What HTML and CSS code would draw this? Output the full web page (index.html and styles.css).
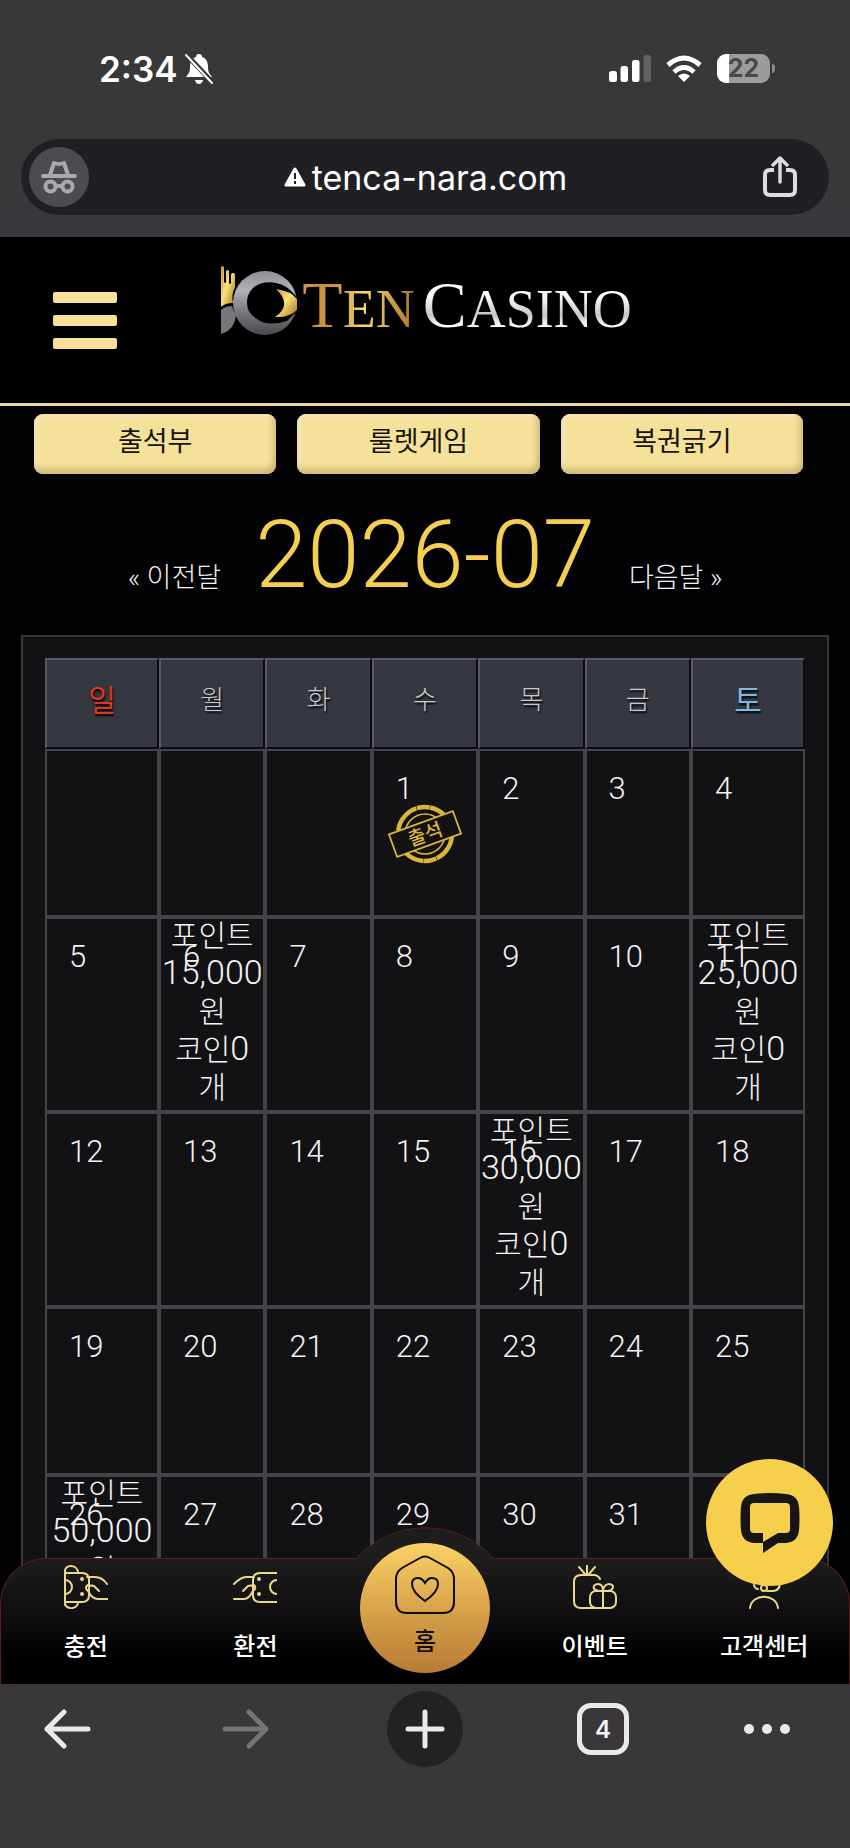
FILE: index.html
```html
<!DOCTYPE html>
<html lang="ko">

<head>
    <meta charset="UTF-8" />
    <meta name="viewport" content="width=device-width, initial-scale=1.0" />
    <title>TEN CASINO 출석부</title>
    <link rel="stylesheet" href="styles.css">
</head>

<body>
    <div class="browser-top">
        <div class="status">
            <div class="status-left">
                <span class="time">2:34</span>
                <svg class="bell" width="30" height="32" viewBox="0 0 30 32">
                    <path d="M15 1c2 0 3 1 3 3 4 1 6 5 6 10 0 6 2 7 4 10H2c2-3 4-4 4-10 0-5 2-9 6-10 0-2 1-3 3-3zM11 27h8q-1 4-4 4t-4-4z" fill="#fff" />
                    <path d="M1 0l28 30" stroke="#383838" stroke-width="5" />
                    <path d="M2 2l26 28" stroke="#fff" stroke-width="2" stroke-linecap="round" />
                </svg>
            </div>
            <div class="status-right">
                <svg width="42" height="27" viewBox="0 0 42 27" fill="#fff">
                    <rect x="0" y="16" width="8" height="11" rx="2.5" />
                    <rect x="11.500" y="11" width="7.500" height="16" rx="2.500" />
                    <rect x="23" y="5" width="7.500" height="22" rx="2.500" />
                    <rect x="34.500" y="0" width="7.500" height="27" rx="2.500" fill="#616161" />
                </svg>
                <svg width="36" height="28" viewBox="0 0 36 28" fill="none" stroke="#fff" stroke-width="5">
                    <path d="M2 10Q18 -4 34 10" />
                    <path d="M8 17Q18 8 28 17" />
                    <path d="M18 27l-6-6q6-5 12 0z" fill="#fff" stroke="none" />
                </svg>
                <div class="battery"><span>22</span></div>
            </div>
        </div>
        <div class="address">
            <button class="incognito" aria-label="시크릿 모드">
                <svg width="38" height="34" viewBox="0 0 38 34" fill="none" stroke="#a9a9ab" stroke-width="4" stroke-linecap="round" stroke-linejoin="round">
                    <path d="M3 16h32M10 15l4-12q5 2 10 0l4 12M16 26h6" />
                    <circle cx="10.500" cy="26.500" r="5" />
                    <circle cx="27.500" cy="26.500" r="5" />
                </svg>
            </button>
            <div class="url">
                <svg width="22" height="20" viewBox="0 0 22 20">
                    <path d="M11 2l9 16H2z" fill="#fff" stroke="#fff" stroke-width="3" stroke-linejoin="round" />
                    <path d="M11 6v6M11 14v3" stroke="#202024" stroke-width="2" />
                </svg>
                <span>tenca-nara.com</span>
            </div>
            <button class="share" aria-label="공유">
                <svg width="36" height="42" viewBox="0 0 36 42" fill="none" stroke="#dedbe1" stroke-width="4" stroke-linecap="round" stroke-linejoin="round">
                    <path d="M18 26V3M11 9l7-7 7 7" stroke-width="3.400" />
                    <path d="M12 14H8q-5 0-5 5v15q0 5 5 5h20q5 0 5-5V19q0-5-5-5h-4" stroke-linecap="butt" />
                </svg>
            </button>
        </div>
    </div>

    <div class="page">
        <header class="header">
            <button class="menu" aria-label="메뉴"><i></i><i></i><i></i></button>
            <a class="logo" href="#">
                <svg width="78" height="72" viewBox="0 0 78 72">
                    <defs>
                        <linearGradient id="silver" x1="0" y1="0" x2="0" y2="1">
                            <stop offset="0" stop-color="#8e8d93" />
                            <stop offset=".3" stop-color="#b3b2b8" />
                            <stop offset=".65" stop-color="#77767b" />
                            <stop offset="1" stop-color="#4a494e" />
                        </linearGradient>
                        <linearGradient id="gold" x1="0" y1="0" x2="1" y2="1">
                            <stop offset="0" stop-color="#c9952f" />
                            <stop offset=".45" stop-color="#f8e27a" />
                            <stop offset="1" stop-color="#a8741d" />
                        </linearGradient>
                    </defs>
                    <circle cx="44" cy="38" r="32" fill="url(#silver)" />
                    <path d="M26 38C26 16 52 12 68 24L76 32V46L66 56Q46 62 36 54 26 48 26 38z" fill="#000" />
                    <path d="M55 24Q70 26 76 34V45Q68 53 54 52 72 40 55 24z" fill="url(#gold)" />
                    <path d="M0 2Q1 0 3 2V17Q4 19 5 17V6Q7 4 8 6V18Q9 20 10 18V9Q12 7 14 9V22Q10 30 12 38 4 38 0 42z" fill="url(#gold)" />
                    <path d="M0 69V45Q4 41 11 41 12 46 15 49 14 65 0 69z" fill="#77767c" />
                </svg>
                <span class="logo-ten"><b>T</b>EN</span>
                <span class="logo-casino"><b>C</b>ASINO</span>
            </a>
        </header>

        <nav class="tabs">
            <button>출석부</button>
            <button>룰렛게임</button>
            <button>복권긁기</button>
        </nav>

        <div class="month">
            <a href="#">« 이전달</a>
            <h1>2026-07</h1>
            <a href="#">다음달 »</a>
        </div>

        <div class="calendar">
            <table>
                <colgroup>
                    <col class="w-edge">
                    <col class="w-wide">
                    <col>
                    <col>
                    <col class="w-wide">
                    <col>
                    <col class="w-edge">
                </colgroup>
                <thead>
                    <tr>
                        <th class="sun">일</th>
                        <th>월</th>
                        <th>화</th>
                        <th>수</th>
                        <th>목</th>
                        <th>금</th>
                        <th class="sat">토</th>
                    </tr>
                </thead>
                <tbody>
                    <tr>
                        <td></td>
                        <td></td>
                        <td></td>
                        <td><span class="day">1</span>
                            <svg class="stamp" width="74" height="62" viewBox="0 0 74 62">
                                <g fill="none" stroke="#d9b53a">
                                    <circle cx="37" cy="31" r="27" stroke-width="4.500" stroke-dasharray="30 .6 13 .4" />
                                    <circle cx="37" cy="31" r="20" stroke-width="1.500" />
                                </g>
                                <g transform="rotate(-20 37 31)">
                                    <rect x="3" y="19" width="68" height="24" fill="#121114" stroke="#d9b53a" stroke-width="1.800" />
                                    <text x="37" y="38" text-anchor="middle" class="stamp-text">출석</text>
                                </g>
                            </svg>
                        </td>
                        <td><span class="day">2</span></td>
                        <td><span class="day">3</span></td>
                        <td><span class="day">4</span></td>
                    </tr>
                    <tr>
                        <td><span class="day">5</span></td>
                        <td><span class="day">6</span>
                            <p class="reward">포인트<br><b>15,000</b><br>원<br>코인<b>0</b><br>개</p>
                        </td>
                        <td><span class="day">7</span></td>
                        <td><span class="day">8</span></td>
                        <td><span class="day">9</span></td>
                        <td><span class="day">10</span></td>
                        <td><span class="day">11</span>
                            <p class="reward">포인트<br><b>25,000</b><br>원<br>코인<b>0</b><br>개</p>
                        </td>
                    </tr>
                    <tr>
                        <td><span class="day">12</span></td>
                        <td><span class="day">13</span></td>
                        <td><span class="day">14</span></td>
                        <td><span class="day">15</span></td>
                        <td><span class="day">16</span>
                            <p class="reward">포인트<br><b>30,000</b><br>원<br>코인<b>0</b><br>개</p>
                        </td>
                        <td><span class="day">17</span></td>
                        <td><span class="day">18</span></td>
                    </tr>
                    <tr>
                        <td><span class="day">19</span></td>
                        <td><span class="day">20</span></td>
                        <td><span class="day">21</span></td>
                        <td><span class="day">22</span></td>
                        <td><span class="day">23</span></td>
                        <td><span class="day">24</span></td>
                        <td><span class="day">25</span></td>
                    </tr>
                    <tr>
                        <td><span class="day">26</span>
                            <p class="reward">포인트<br><b>50,000</b><br>원<br>코인<b>0</b><br>개</p>
                        </td>
                        <td><span class="day">27</span></td>
                        <td><span class="day">28</span></td>
                        <td><span class="day">29</span></td>
                        <td><span class="day">30</span></td>
                        <td><span class="day">31</span></td>
                        <td></td>
                    </tr>
                </tbody>
            </table>
        </div>

        <nav class="bottom-nav">
            <svg class="bump" width="140" height="33" viewBox="0 0 140 33">
                <path d="M0 33L2 31A92 92 0 0 1 138 31L140 33z" fill="#1e1d1c" />
                <path d="M1 32A92 92 0 0 1 139 32" fill="none" stroke="#5c1d20" />
            </svg>
            <a href="#">
                <svg width="44" height="44" viewBox="0 0 44 44">
                    <path d="M1 8V6C1-1 14-1 14 8M1 37V38C1 45 14 45 14 37M1 5V40M1 8H18Q25 8 25 15V30Q25 37 18 37H1M1 15A7 7 0 0 1 1 29M23 12H31Q38 12 43 19M35 26L30 21 24 20Q20 22 24 26 28 34 34 34H44" />
                    <circle cx="18" cy="14" r="1" />
                    <circle cx="18" cy="29" r="1" />
                </svg>
                <span>충전</span>
            </a>
            <a href="#">
                <svg width="44" height="44" viewBox="0 0 44 44">
                    <path d="M44 8H27Q20 8 20 15V30Q20 37 27 37H44M44 15A7 7 0 0 0 44 29M1 19Q8 12 13 12H21M10 26L15 21 21 20Q24 23 20 26 16 34 11 34H1" />
                    <circle cx="26" cy="14" r="1" />
                    <circle cx="26" cy="29" r="1" />
                </svg>
                <span>환전</span>
            </a>
            <a class="home" href="#">
                <svg width="62" height="60" viewBox="0 0 62 60">
                    <path d="M26 3Q31 0 36 3L54 13Q60 17 60 24V47Q60 58 49 58H13Q2 58 2 47V24Q2 17 8 13z" />
                    <path d="M31 46Q18 37 18 29 18 23 24 23 28 23 31 28 34 23 38 23 44 23 44 29 44 37 31 46z" />
                </svg>
                <span>홈</span>
            </a>
            <a href="#">
                <svg width="44" height="44" viewBox="0 0 44 44">
                    <path d="M27 14Q25 10 21 10H8Q1 10 1 17V36Q1 43 8 43H38M14 0V9M6 2L12 9M22 2L16 9M30 26V43M30 26C18 27 19 19 25 19 29 19 30 23 30 26 30 23 32 19 36 19 42 19 42 27 30 26" />
                    <rect x="17" y="26" width="26" height="17" rx="6" />
                </svg>
                <span>이벤트</span>
            </a>
            <a href="#">
                <svg width="44" height="44" viewBox="0 0 44 44">
                    <path d="M8 43C10 28 34 28 36 43M12 20Q13 24 16 24M25 26H31Q37 26 38 19M11 14A11 11 0 0 1 33 14" />
                    <circle cx="22" cy="23" r="3" />
                </svg>
                <span>고객센터</span>
            </a>
        </nav>

        <button class="chat" aria-label="채팅 상담">
            <svg width="60" height="60" viewBox="0 0 60 60">
                <path d="M14 1Q30-1 46 1 58 2 59 14 60 25 59 37 58 49 46 50H38L23 60V50H14Q2 49 1 37 0 25 1 14 2 2 14 1zM14 10Q10 10 10 14V36Q10 40 14 40H23V49L38 40H46Q50 40 50 36V14Q50 10 46 10z" fill="#171614" fill-rule="evenodd" />
            </svg>
        </button>
    </div>

    <div class="browser-bottom">
        <button aria-label="뒤로">
            <svg width="48" height="40" viewBox="0 0 48 40"><path d="M45 20H4M21 3L4 20l17 17" /></svg>
        </button>
        <button class="disabled" aria-label="앞으로" disabled>
            <svg width="48" height="40" viewBox="0 0 48 40"><path d="M3 20h41M27 3l17 17-17 17" /></svg>
        </button>
        <button class="plus" aria-label="새 탭">
            <svg width="40" height="40" viewBox="0 0 40 40"><path d="M20 3v34M3 20h34" /></svg>
        </button>
        <button class="count">4</button>
        <button aria-label="더보기">
            <svg class="dots" width="48" height="12" viewBox="0 0 48 12">
                <circle cx="6" cy="6" r="5" />
                <circle cx="24" cy="6" r="5" />
                <circle cx="42" cy="6" r="5" />
            </svg>
        </button>
    </div>
</body>

</html>
```
FILE: styles.css
```css
* {
    box-sizing: border-box;
}

body {
    margin: 0;
    height: 100vh;
    display: flex;
    flex-direction: column;
    overflow: hidden;
    background-color: #000;
    color: #f4f2f5;
    font-family: Roboto, 'Noto Sans CJK KR', sans-serif;
    font-weight: 300;
}

button {
    padding: 0;
    border: none;
    background: none;
    font-family: inherit;
    color: inherit;
    cursor: pointer;
}

a {
    color: inherit;
    text-decoration: none;
}

svg {
    display: block;
    flex-shrink: 0;
}

/* browser top */
.browser-top {
    flex-shrink: 0;
    padding: 0 21px 22px;
    background: linear-gradient(#383838 60%, #3a383d);
    font-family: Inter, sans-serif;
}

.status {
    height: 139px;
    display: flex;
    justify-content: space-between;
    align-items: center;
    padding: 0 59px 2px 78px;
}

.status-left,
.status-right {
    display: flex;
    align-items: center;
}

.status-left {
    gap: 6px;
}

.status-right {
    gap: 15px;
}

.time {
    font-size: 35px;
    font-weight: 600;
    color: #fff;
}

.battery {
    position: relative;
    width: 53px;
    height: 29px;
    border-radius: 9px;
    background: linear-gradient(90deg, #fff 12px, #9c9c9c 12px);
    font-size: 25px;
    line-height: 29px;
    font-weight: 700;
    text-align: center;
    color: #484848;
}

.battery::after {
    content: '';
    position: absolute;
    left: 55px;
    top: 10px;
    width: 3px;
    height: 9px;
    border-radius: 0 3px 3px 0;
    background-color: #8a8a8a;
}

.address {
    height: 76px;
    display: flex;
    justify-content: space-between;
    align-items: center;
    padding: 0 31px 0 8px;
    border-radius: 38px;
    background-color: #202024;
}

.incognito {
    width: 60px;
    height: 60px;
    display: flex;
    justify-content: center;
    align-items: center;
    border-radius: 50%;
    background-color: #4a4c50;
}

.url {
    display: flex;
    align-items: center;
    gap: 6px;
    font-size: 34px;
    font-weight: 400;
    color: #fff;
}

/* header */
.page {
    position: relative;
    flex: 1;
    min-height: 0;
    overflow: hidden;
    background-color: #020103;
}

.header {
    height: 169px;
    display: grid;
    grid-template-columns: 1fr auto 1fr;
    align-items: start;
    padding: 28px 50px 0 53px;
    border-bottom: 3px solid #ead9a0;
    background-color: #000;
}

.menu {
    width: 64px;
    margin-top: 27px;
    display: flex;
    flex-direction: column;
    gap: 12px;
}

.menu i {
    width: 100%;
    height: 11px;
    border-radius: 2px;
    background-color: #f5e199;
}

.logo {
    display: flex;
    font-family: 'Liberation Serif', serif;
    font-size: 54px;
    font-weight: 400;
    line-height: 80px;
}

.logo b {
    font-size: 66px;
    font-weight: 400;
}

.logo span {
    background-clip: text;
    -webkit-background-clip: text;
    color: transparent;
}

.logo-ten {
    margin: 0 8px 0 3px;
    background-image: linear-gradient(90deg, #cf9444, #c8913b 30%, #f7dd66 55%, #a8702c);
}

.logo-casino {
    background-image: linear-gradient(#fff 35%, #c6c5cb 60%, #fff 72%);
}

.tabs {
    display: grid;
    grid-template-columns: repeat(3, 1fr);
    gap: 21px;
    padding: 8px 47px 0 34px;
}

.tabs button {
    height: 60px;
    padding-bottom: 10px;
    border-radius: 9px;
    background-color: #f5e19a;
    box-shadow: inset -3px -5px 6px #cdb878, inset 3px 3px 5px #f7e8b8;
    font-size: 27px;
    font-weight: 400;
    color: #17130a;
}

.month {
    display: flex;
    justify-content: center;
    align-items: baseline;
    gap: 34px;
    height: 161px;
}

.month h1 {
    margin: 0;
    font-size: 94px;
    font-weight: 300;
    line-height: 162px;
    color: #f5cf52;
}

.month a {
    font-size: 27px;
}

/* calendar */
.calendar {
    margin: 0 21px;
    padding: 21px 22px;
    border: 2px solid #37363a;
    background-color: #121114;
}

table {
    width: 100%;
    table-layout: fixed;
    border-collapse: separate;
    border-spacing: 0;
}

.w-edge {
    width: 15%;
}

.w-wide {
    width: 14%;
}

th {
    height: 91px;
    padding: 0 0 12px;
    border: 2px solid;
    border-color: #5a5a60 #0c0c10 #0c0c10 #5a5a60;
    background-color: #353841;
    font-size: 26px;
    font-weight: 300;
    color: #c9c9cc;
    text-shadow: 1px 2px 2px #000;
}

.sun,
.sat {
    font-size: 30px;
    font-weight: 400;
}

.sun {
    color: #dc3425;
}

.sat {
    color: #7db9e8;
}

td {
    position: relative;
    height: 168px;
    padding: 0;
    border: 2px solid #444347;
    vertical-align: top;
}

.day {
    position: absolute;
    left: 22px;
    top: 18px;
    font-size: 31px;
    line-height: 40px;
}

.reward {
    position: relative;
    margin: -2px 0 0;
    padding-bottom: 3px;
    font-size: 30px;
    line-height: 38px;
    text-align: center;
    white-space: nowrap;
}

.reward b {
    font-size: 34px;
    font-weight: 300;
    line-height: 30px;
}

.stamp {
    margin: 52px auto 0;
}

.stamp-text {
    font-size: 19px;
    font-weight: 500;
    fill: #d9b53a;
}

/* bottom menu */
.bottom-nav {
    position: absolute;
    left: 0;
    right: 0;
    bottom: 0;
    height: 126px;
    display: grid;
    grid-template-columns: repeat(5, 1fr);
    border: 1px solid #5c1d20;
    border-bottom: none;
    border-radius: 46px 46px 0 0;
    background: linear-gradient(#1e1d1c, #0f0d10 45%, #000 80%);
}

.bottom-nav a {
    display: flex;
    flex-direction: column;
    align-items: center;
    padding-top: 6px;
    gap: 20px;
    font-size: 24px;
    font-weight: 500;
    line-height: 36px;
    color: #fff;
}

.bottom-nav a svg {
    fill: none;
    stroke: #ead88d;
    stroke-width: 2;
    stroke-linecap: round;
}

.bottom-nav .bump {
    position: absolute;
    left: 50%;
    bottom: 124px;
    margin-left: -70px;
}

.bottom-nav .home {
    position: absolute;
    left: 50%;
    bottom: 11px;
    width: 130px;
    height: 130px;
    margin-left: -65px;
    padding-top: 12px;
    gap: 9px;
    border-radius: 50%;
    background: linear-gradient(#fbd166, #d9a44b 50%, #b87a35);
    color: #120d05;
}

.bottom-nav .home svg {
    stroke: #0d0a05;
}

.bottom-nav a:nth-of-type(4) {
    grid-column: 4;
}

.chat {
    position: absolute;
    right: 17px;
    bottom: 98px;
    width: 127px;
    height: 127px;
    display: flex;
    justify-content: center;
    align-items: center;
    border-radius: 50%;
    background-color: #f6cf4c;
}

/* browser bottom */
.browser-bottom {
    flex-shrink: 0;
    height: 164px;
    display: grid;
    grid-template-columns: 134fr 224fr 134fr 222fr 106fr;
    justify-items: center;
    align-items: start;
    padding: 7px 30px 0 0;
    background-color: #393739;
    font-family: Inter, sans-serif;
}

.browser-bottom button {
    height: 76px;
    display: flex;
    justify-content: center;
    align-items: center;
}

.browser-bottom svg {
    fill: none;
    stroke: #ebe8ec;
    stroke-width: 5;
    stroke-linecap: round;
    stroke-linejoin: round;
}

.browser-bottom .disabled svg {
    stroke: #757376;
}

.browser-bottom .plus {
    width: 76px;
    border-radius: 50%;
    background-color: #222124;
}

.browser-bottom .count {
    width: 52px;
    height: 52px;
    margin-top: 12px;
    border: 5px solid #ebe8ec;
    border-radius: 14px;
    font-size: 24px;
    font-weight: 600;
}

.browser-bottom .dots {
    fill: #ebe8ec;
    stroke: none;
}
```
